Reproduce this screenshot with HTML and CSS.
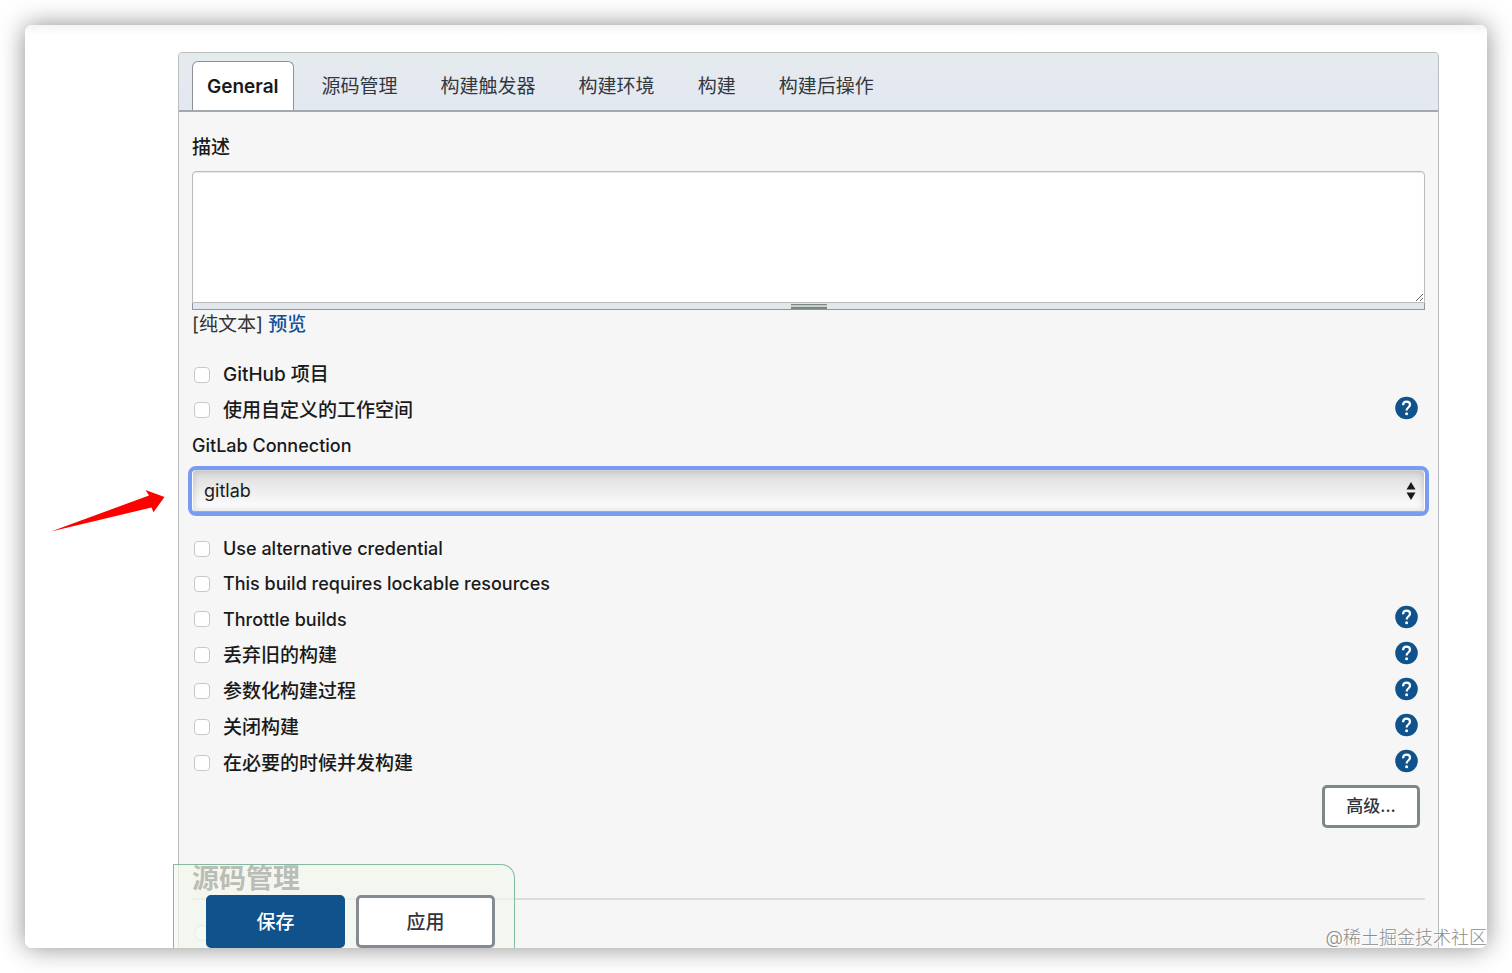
FILE: index.html
```html
<!DOCTYPE html>
<html lang="zh-CN">
<head>
    <meta charset="UTF-8">
    <meta name="viewport" content="width=device-width, initial-scale=1.0">
    <title>General</title>
    <link rel="stylesheet" href="styles.css">
</head>
<body>
    <svg class="symbols" aria-hidden="true">
        <symbol id="help-icon" viewBox="0 0 24 24">
            <circle cx="11.5" cy="12" r="11.3" fill="#10528c"/>
            <path d="M8.1 9.2C8.1 7 9.5 5.7 11.5 5.7s3.5 1.3 3.5 3.1c0 2.6-3.4 2.8-3.4 5.6" fill="none" stroke="#fff" stroke-width="2.2"/>
            <circle cx="11.6" cy="17.8" r="1.5" fill="#fff"/>
        </symbol>
    </svg>

    <div class="window">
        <form class="config" id="config">
            <nav class="tab-bar">
                <a class="tab active" href="#general">General</a>
                <a class="tab" href="#scm">源码管理</a>
                <a class="tab" href="#triggers">构建触发器</a>
                <a class="tab" href="#environment">构建环境</a>
                <a class="tab" href="#build">构建</a>
                <a class="tab" href="#post-build">构建后操作</a>
            </nav>

            <div class="config-body" id="general">
                <label class="field-label" for="description">描述</label>
                <textarea class="description" id="description"></textarea>
                <div class="resize-handle"><span class="grip"></span></div>
                <p class="format">[纯文本] <a href="#preview">预览</a></p>

                <div class="option">
                    <input type="checkbox" id="github">
                    <label for="github">GitHub 项目</label>
                </div>
                <div class="option">
                    <input type="checkbox" id="workspace">
                    <label for="workspace">使用自定义的工作空间</label>
                    <button class="help" type="button" aria-label="使用自定义的工作空间"><svg><use href="#help-icon"/></svg></button>
                </div>

                <label class="field-label latin" for="connection">GitLab Connection</label>
                <div class="select-wrap">
                    <select class="select" id="connection">
                        <option>gitlab</option>
                    </select>
                    <svg class="select-arrows" viewBox="0 0 10 18"><path d="M5 0l4.5 7.5h-9zM5 18l4.5-7.5h-9z" fill="#1a1a1a"/></svg>
                </div>

                <div class="option">
                    <input type="checkbox" id="credential">
                    <label class="latin" for="credential">Use alternative credential</label>
                </div>
                <div class="option">
                    <input type="checkbox" id="lockable">
                    <label class="latin" for="lockable">This build requires lockable resources</label>
                </div>
                <div class="option">
                    <input type="checkbox" id="throttle">
                    <label class="latin" for="throttle">Throttle builds</label>
                    <button class="help" type="button" aria-label="Throttle builds"><svg><use href="#help-icon"/></svg></button>
                </div>
                <div class="option">
                    <input type="checkbox" id="discard">
                    <label for="discard">丢弃旧的构建</label>
                    <button class="help" type="button" aria-label="丢弃旧的构建"><svg><use href="#help-icon"/></svg></button>
                </div>
                <div class="option">
                    <input type="checkbox" id="params">
                    <label for="params">参数化构建过程</label>
                    <button class="help" type="button" aria-label="参数化构建过程"><svg><use href="#help-icon"/></svg></button>
                </div>
                <div class="option">
                    <input type="checkbox" id="disable">
                    <label for="disable">关闭构建</label>
                    <button class="help" type="button" aria-label="关闭构建"><svg><use href="#help-icon"/></svg></button>
                </div>
                <div class="option">
                    <input type="checkbox" id="concurrent">
                    <label for="concurrent">在必要的时候并发构建</label>
                    <button class="help" type="button" aria-label="在必要的时候并发构建"><svg><use href="#help-icon"/></svg></button>
                </div>

                <div class="advanced-row">
                    <button class="btn btn-small" type="button">高级...</button>
                </div>

                <h2 class="section-title" id="scm">源码管理</h2>
                <div class="option">
                    <input type="radio" name="scm" aria-label="源码管理">
                </div>
            </div>
        </form>

        <div class="save-bar">
            <button class="btn btn-primary" type="submit" form="config">保存</button>
            <button class="btn" type="button">应用</button>
        </div>

        <svg class="pointer" viewBox="0 0 114 43"><path d="M0 42.5L98 6.5L94.5 1L113.5 8L102.5 23.2L100.5 18.5Z" fill="#f00"/></svg>
        <span class="watermark">@稀土掘金技术社区</span>
    </div>
</body>
</html>
```

FILE: styles.css
```css
* {
    box-sizing: border-box;
}
body {
    margin: 0;
    padding: 25px;
    background: #fff;
    color: #1a1a1a;
    font-family: Inter, "Noto Sans CJK SC", sans-serif;
    font-size: 19px;
}
button, select, textarea {
    font: inherit;
    color: inherit;
}
a {
    color: #10529a;
    text-decoration: none;
}
.symbols {
    display: none;
}
.window {
    position: relative;
    height: calc(100vh - 50px);
    padding: 27px 48px 0 153px;
    overflow: hidden;
    border-radius: 7px;
    background: linear-gradient(#f4f4f4, #fff 10px);
    box-shadow: 0 0 26px rgba(0, 0, 0, 0.45);
}
.config {
    min-height: 100%;
    border: 1px solid #b9bdc0;
    border-radius: 4px 4px 0 0;
    background: #f6f6f6;
}

/* Tabs */
.tab-bar {
    display: flex;
    gap: 13px;
    height: 59px;
    padding: 8px 13px 0;
    border-bottom: 2px solid #a2a9af;
    border-radius: 3px 3px 0 0;
    background: linear-gradient(#e4ebec, #e4e9f1 30px);
}
.tab {
    padding: 0 14px;
    border: 1px solid transparent;
    border-bottom: 0;
    border-radius: 6px 6px 0 0;
    color: #33383d;
    line-height: 50px;
}
.tab.active {
    height: 49px;
    border-color: #8b9299;
    background: #fff;
    color: #1a1a1a;
    font-weight: 600;
}

/* Form */
.config-body {
    padding: 18px 13px 0;
}
.field-label {
    display: block;
    font-weight: 500;
    line-height: 36px;
}
.description {
    display: block;
    width: 100%;
    height: 132px;
    margin-top: 5px;
    border: 1px solid #b9bdc0;
    border-radius: 4px 4px 0 0;
    outline: none;
    background: #fff;
    box-shadow: inset 0 1px 1px rgba(0, 0, 0, 0.1);
    resize: vertical;
}
.resize-handle {
    display: flex;
    justify-content: center;
    height: 7px;
    padding-top: 1px;
    border: 1px solid #8e979d;
    border-top: 0;
    background: #e2e7eb;
}
.grip {
    width: 36px;
    height: 5px;
    border: solid #7b8783;
    border-width: 1px 0 2px;
    background: #c5ceca;
}
.format {
    margin: 0 0 17px;
    color: #333;
    line-height: 30px;
}
.format a {
    font-weight: 500;
}
.option {
    display: flex;
    align-items: center;
    min-height: 35px;
    padding: 0 6px 0 2px;
    font-weight: 500;
}
.option label {
    padding-left: 13px;
    line-height: 35px;
}
.latin {
    font-size: 18px;
}
.option input {
    flex: none;
    width: 16px;
    height: 16px;
    margin: 0;
    appearance: none;
    border: 1px solid #c8c8c8;
    border-radius: 4px;
    background: #fff;
}
.option input[type="radio"] {
    border-radius: 50%;
}
.help {
    flex: none;
    width: 24px;
    height: 36px;
    margin-left: auto;
    padding: 4px 0 8px;
    border: 0;
    background: none;
    cursor: pointer;
}
.help svg {
    display: block;
    width: 24px;
    height: 24px;
}
.select-wrap {
    position: relative;
    margin: 6px 0 19px;
}
.select {
    display: block;
    width: 100%;
    height: 42px;
    padding: 0 11px 2px;
    appearance: none;
    border: 1px solid #c4c4c4;
    border-color: #d5d5d5 #fff #aaa;
    border-radius: 4px;
    outline: 4px solid #789df0;
    background: linear-gradient(#dcdcdc, #fff);
    box-shadow: inset 0 0 7px rgba(0, 0, 0, 0.18);
    font-size: 18px;
}
.select-arrows {
    position: absolute;
    top: 12px;
    right: 9px;
    width: 10px;
    height: 18px;
    pointer-events: none;
}

/* Buttons */
.btn {
    width: 139px;
    height: 53px;
    padding: 0 0 2px;
    border: 3px solid #858b92;
    border-radius: 5px;
    background: #fff;
    color: #33353c;
    font-weight: 500;
    cursor: pointer;
}
.btn-primary {
    border-color: #10528c;
    background: #10528c;
    color: #fff;
}
.btn-small {
    width: 98px;
    height: 43px;
    padding-bottom: 4px;
    border-color: #7b8989;
    font-size: 17px;
}
.advanced-row {
    display: flex;
    justify-content: flex-end;
    padding: 4px 5px 0 0;
}
.section-title {
    margin: 31px 0 15px;
    border-bottom: 2px solid #ddd;
    color: #333;
    font-size: 27px;
    font-weight: 700;
    line-height: 39px;
}
.save-bar {
    position: absolute;
    bottom: 0;
    left: 148px;
    display: flex;
    gap: 11px;
    padding: 30px 19px 0 32px;
    border: 1px solid #83bba1;
    border-bottom: 0;
    border-radius: 0 14px 0 0;
    background: rgba(243, 248, 237, 0.7);
}

/* Annotation */
.pointer {
    position: absolute;
    top: 464px;
    left: 26px;
    width: 114px;
    height: 43px;
}
.watermark {
    position: absolute;
    right: 0;
    bottom: 0;
    color: #8c8c8c;
    font-size: 18px;
    font-weight: 300;
    line-height: 20px;
    text-shadow: 1px 1px 0 #fff;
}
```
